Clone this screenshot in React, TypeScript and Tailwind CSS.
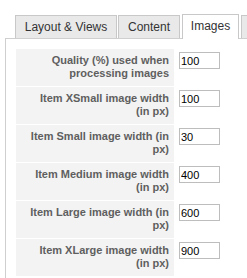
const tabs = [
  { label: "Layout & Views", width: "w-[102px]", ml: "ml-0", active: false },
  { label: "Content", width: "w-[62px]", ml: "ml-px", active: false },
  { label: "Images", width: "w-[57px]", ml: "ml-[2px]", active: true },
  // next tab only peeks in at the right edge; its label is off-screen
  { label: "", width: "w-[40px]", ml: "ml-[2px]", active: false },
];

const rows = [
  { label: "Quality (%) used when processing images", value: "100" },
  { label: "Item XSmall image width (in px)", value: "100" },
  { label: "Item Small image width (in px)", value: "30" },
  { label: "Item Medium image width (in px)", value: "400" },
  { label: "Item Large image width (in px)", value: "600" },
  { label: "Item XLarge image width (in px)", value: "900" },
];

export default function App() {
  return (
    <div className="w-[247px] h-[278px] overflow-hidden bg-white pt-[14px] pl-[5px] font-['Liberation_Sans',Arial,sans-serif]">
      {/* Tab strip */}
      <div className="flex items-end pl-[10px] whitespace-nowrap">
        {tabs.map((t, i) =>
          t.active ? (
            <div
              key={i}
              className={`${t.width} ${t.ml} shrink-0 h-[25px] -mb-px relative z-10 bg-white border border-b-0 border-[#c8c8c8] flex items-center justify-center pb-[2px] text-[12px] text-[#333]`}
            >
              {t.label}
            </div>
          ) : (
            <div
              key={i}
              className={`${t.width} ${t.ml} shrink-0 h-[23px] bg-[#e9e9e9] border border-b-0 border-[#c8c8c8] flex items-center justify-center text-[12px] text-[#333]`}
            >
              {t.label}
            </div>
          )
        )}
      </div>

      {/* Panel */}
      <div className="w-[260px] h-[260px] border-l border-t border-[#cfcfcf] pt-[10px] pl-[10px]">
        {rows.map((r) => (
          <div key={r.label} className="flex items-start h-[38px]">
            <div className="w-[158px] h-[37px] bg-[#f3f3f3] text-right pl-[8px] pr-[5px] pt-[5px] text-[11px] leading-[13px] font-bold text-[#5f5f5f]">
              {r.label}
            </div>
            <input
              readOnly
              value={r.value}
              className="ml-[5px] mt-[3px] w-[41px] h-[17px] border border-[#bdbdbd] bg-white px-[1px] text-[11px] leading-[15px] text-black outline-none"
            />
          </div>
        ))}
      </div>
    </div>
  );
}
